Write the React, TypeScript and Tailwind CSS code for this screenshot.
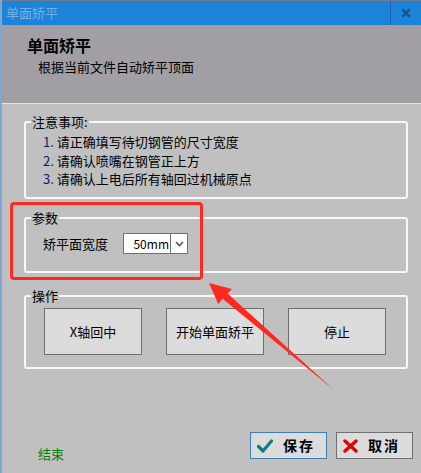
import { X } from 'lucide-react'

const font = { fontFamily: '"Noto Sans CJK SC", "Liberation Sans", sans-serif' }

function GroupBox({ title, className, children }: { title: string; className: string; children: React.ReactNode }) {
  return (
    <fieldset className={`rounded-[3px] border-2 border-[#f6f7f8] ${className}`}>
      <legend className="ml-[5px] px-[1px] text-[13px] leading-[17px] text-black">{title}</legend>
      {children}
    </fieldset>
  )
}

function ActionButton({ label }: { label: string }) {
  return (
    <div className="flex h-[47px] w-[98px] items-center justify-center border border-[#6e6e6e] bg-[#dcdcdc] text-[13px] text-black">
      {label}
    </div>
  )
}

export default function App() {
  return (
    <div
      style={font}
      className="relative flex h-[473px] w-[421px] flex-col overflow-hidden border-l-2 border-[#7fa6d0] bg-[#c0c0c0]"
    >
      {/* Title bar */}
      <div className="flex h-[25px] shrink-0 items-stretch border-t border-[#6d7b8c] bg-[#1b84d9]">
        <div className="flex flex-1 items-center pl-[4px] text-[13px] text-[#74b0e6]">单面矫平</div>
        <div className="flex w-[31px] items-center justify-center border-l border-[#1567ad]">
          <X size={12} strokeWidth={4.5} className="text-[#124f88]" />
        </div>
      </div>

      {/* Header */}
      <div className="flex h-[78px] shrink-0 flex-col bg-[#a19fa4] pl-[25px] pt-[10px]">
        <div className="text-[16px] font-bold leading-[20px] text-black">单面矫平</div>
        <div className="mt-[3px] pl-[11px] text-[13px] leading-[18px] text-black">根据当前文件自动矫平顶面</div>
      </div>
      <div className="h-px shrink-0 bg-[#dfe8f2]" />

      {/* Body */}
      <div className="flex flex-1 flex-col pl-[22px] pr-[13px] pt-[9px]">
        <GroupBox title="注意事项:" className="h-[86px]">
          <div className="flex flex-col pl-[17px] pt-[3px] text-[13px] leading-[18.5px] text-black">
            <div>
              <span className="text-[#0a1a6a]">1.</span> 请正确填写待切钢管的尺寸宽度
            </div>
            <div>
              <span className="text-[#0a1a6a]">2.</span> 请确认喷嘴在钢管正上方
            </div>
            <div>
              <span className="text-[#0a1a6a]">3.</span> 请确认上电后所有轴回过机械原点
            </div>
          </div>
        </GroupBox>

        <GroupBox title="参数" className="mt-[10px] h-[64px]">
          <div className="flex items-center pl-[17px] pt-[7px]">
            <span className="w-[80px] text-[13px] text-black">矫平面宽度</span>
            <div className="flex h-[21px] w-[65px] items-stretch border border-[#707070] bg-white">
              <span className="flex flex-1 items-center justify-end pr-[1px] text-[12px] text-black">50mm</span>
              <span className="flex w-[17px] items-center justify-center border-l border-[#707070]">
                <svg width="9" height="6" viewBox="0 0 9 6">
                  <path d="M1 1 L4.5 4.5 L8 1" fill="none" stroke="#555" strokeWidth="1.6" />
                </svg>
              </span>
            </div>
          </div>
        </GroupBox>

        <GroupBox title="操作" className="mt-[14px] h-[82px]">
          <div className="flex gap-[24px] pl-[18px] pt-[4px]">
            <ActionButton label="X轴回中" />
            <ActionButton label="开始单面矫平" />
            <ActionButton label="停止" />
          </div>
        </GroupBox>

        {/* Footer */}
        <div className="mt-auto flex items-end justify-between pb-[14px] pl-[14px]">
          <span className="mb-[-4px] text-[13px] text-[#008000]">结束</span>
          <div className="mr-[-5px] flex gap-[9px]">
            <div className="flex h-[27px] w-[77px] items-center gap-[10px] border border-[#3c7fb1] bg-[#dcdcdc] pl-[6px]">
              <svg width="16" height="14" viewBox="0 0 16 14">
                <path d="M1.5 7.5 L6 12 L14.5 2" fill="none" stroke="#137b80" strokeWidth="3.2" strokeLinecap="round" strokeLinejoin="round" />
              </svg>
              <span className="text-[14px] font-bold tracking-[2px] text-black">保存</span>
            </div>
            <div className="flex h-[27px] w-[77px] items-center gap-[10px] border border-[#707070] bg-[#dcdcdc] pl-[6px]">
              <svg width="15" height="14" viewBox="0 0 15 14">
                <path d="M2 2 L13 12 M13 2 L2 12" fill="none" stroke="#e00000" strokeWidth="3.4" strokeLinecap="round" />
              </svg>
              <span className="text-[14px] font-bold tracking-[2px] text-black">取消</span>
            </div>
          </div>
        </div>
      </div>

      {/* Red annotation */}
      <div className="pointer-events-none absolute left-[8px] top-[202px] h-[78px] w-[193px] rounded-[4px] border-[3px] border-[#ff2a1f]" />
      <svg className="pointer-events-none absolute left-0 top-0" width="421" height="473">
        <polygon
          points="207,283 230,289 225.6,293.6 332,390 220.6,298.8 216.2,304"
          fill="#ff2a1f"
        />
      </svg>
    </div>
  )
}
